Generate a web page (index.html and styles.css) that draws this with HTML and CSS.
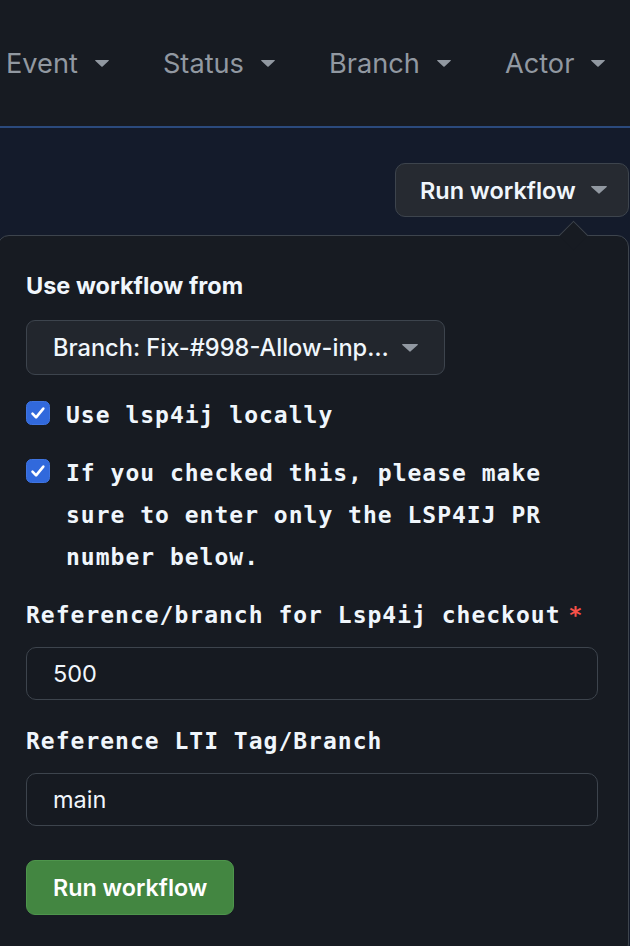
FILE: index.html
```html
<!DOCTYPE html>
<html lang="en">
<head>
<meta charset="utf-8">
<title>Run workflow</title>
<link rel="stylesheet" href="styles.css">
</head>
<body>
<header class="filters">
  <div class="filter">Event <svg class="caret" viewBox="0 0 14 7"><path d="M0.6 0h12.8a.5.5 0 0 1 .35.85L7.35 6.65a.5.5 0 0 1-.7 0L.25.85A.5.5 0 0 1 .6 0z"/></svg></div>
  <div class="filter">Status <svg class="caret" viewBox="0 0 14 7"><path d="M0.6 0h12.8a.5.5 0 0 1 .35.85L7.35 6.65a.5.5 0 0 1-.7 0L.25.85A.5.5 0 0 1 .6 0z"/></svg></div>
  <div class="filter">Branch <svg class="caret" viewBox="0 0 14 7"><path d="M0.6 0h12.8a.5.5 0 0 1 .35.85L7.35 6.65a.5.5 0 0 1-.7 0L.25.85A.5.5 0 0 1 .6 0z"/></svg></div>
  <div class="filter">Actor <svg class="caret" viewBox="0 0 14 7"><path d="M0.6 0h12.8a.5.5 0 0 1 .35.85L7.35 6.65a.5.5 0 0 1-.7 0L.25.85A.5.5 0 0 1 .6 0z"/></svg></div>
</header>
<section class="run-area">
  <div class="run-bar">
    <button class="run-toggle">Run workflow <svg class="caret-sm" viewBox="0 0 14 7"><path d="M0.6 0h12.8a.5.5 0 0 1 .35.85L7.35 6.65a.5.5 0 0 1-.7 0L.25.85A.5.5 0 0 1 .6 0z"/></svg></button>
  </div>
  <div class="popover">
    <span class="popover-arrow"></span>
    <div class="field-title">Use workflow from</div>
    <button class="branch-select">Branch: Fix-#998-Allow-inp… <svg class="caret-sm" viewBox="0 0 14 7"><path d="M0.6 0h12.8a.5.5 0 0 1 .35.85L7.35 6.65a.5.5 0 0 1-.7 0L.25.85A.5.5 0 0 1 .6 0z"/></svg></button>
    <label class="check-row">
      <svg class="checkbox" viewBox="0 0 24 24"><rect x="0.5" y="0.5" width="23" height="23" rx="5" fill="#3169dc" stroke="#3f74e0"/><path d="M6.5 12.6l3.6 3.8 7.2-8.8" fill="none" stroke="#fff" stroke-width="2.6" stroke-linecap="round" stroke-linejoin="round"/></svg>
      <span>Use lsp4ij locally</span>
    </label>
    <label class="check-row">
      <svg class="checkbox" viewBox="0 0 24 24"><rect x="0.5" y="0.5" width="23" height="23" rx="5" fill="#3169dc" stroke="#3f74e0"/><path d="M6.5 12.6l3.6 3.8 7.2-8.8" fill="none" stroke="#fff" stroke-width="2.6" stroke-linecap="round" stroke-linejoin="round"/></svg>
      <span>If you checked this, please make sure to enter only the LSP4IJ PR number below.</span>
    </label>
    <div class="field-label">Reference/branch for Lsp4ij checkout<span class="req">*</span></div>
    <div class="text-input">500</div>
    <div class="field-label second">Reference LTI Tag/Branch</div>
    <div class="text-input">main</div>
    <button class="run-btn">Run workflow</button>
  </div>
</section>
</body>
</html>
```
FILE: styles.css
```css
html, body {
  margin: 0;
  padding: 0;
}
body {
  width: 630px;
  height: 946px;
  overflow: hidden;
  background: #171b22;
  font-family: Inter, "Noto Sans", sans-serif;
  color: #f0f6fc;
}
button {
  font-family: Inter, "Noto Sans", sans-serif;
  cursor: pointer;
}
.filters {
  height: 126px;
  display: flex;
  align-items: center;
  gap: 54px;
  padding-left: 6px;
  border-bottom: 2px solid #2b4a7d;
  color: #9198a1;
  font-size: 27.2px;
}
.filter {
  display: flex;
  align-items: center;
  gap: 17px;
}
.caret {
  width: 14px;
  height: 7px;
  fill: #9198a1;
}
.caret-sm {
  width: 16px;
  height: 8px;
  fill: #9198a1;
  flex: none;
}
.run-area {
  background: #141b2b;
  padding-top: 35px;
}
.run-bar {
  display: flex;
  justify-content: flex-end;
  padding-right: 1px;
  margin-bottom: 18px;
}
.run-toggle {
  height: 54px;
  width: 234px;
  padding: 0 0 0 24px;
  display: flex;
  align-items: center;
  gap: 15px;
  background: #262a31;
  border: 1px solid #3d444d;
  border-radius: 10px;
  color: #f0f6fc;
  font-size: 23.5px;
  font-weight: 600;
}
.popover {
  position: relative;
  margin: 0 1px 0 -3px;
  background: #171b22;
  border: 1px solid #3d444d;
  border-radius: 12px;
  padding: 34px 30px 40px 28px;
  display: flex;
  flex-direction: column;
  align-items: flex-start;
}
.popover-arrow {
  position: absolute;
  left: 565px;
  top: -11px;
  width: 20px;
  height: 20px;
  background: #171b22;
  border-left: 1px solid #3d444d;
  border-top: 1px solid #3d444d;
  transform: rotate(45deg);
}
.field-title {
  font-weight: 700;
  font-size: 23.5px;
  line-height: 32px;
  color: #f0f6fc;
}
.branch-select {
  margin-top: 18px;
  height: 55px;
  width: 419px;
  padding: 0 26px;
  display: flex;
  align-items: center;
  justify-content: space-between;
  background: #22262d;
  border: 1px solid #3d444d;
  border-radius: 9px;
  color: #f0f6fc;
  font-size: 23.6px;
  font-weight: 500;
}
.check-row {
  margin-top: 19px;
  display: flex;
  align-items: flex-start;
  gap: 16px;
  font-family: "DejaVu Sans Mono", "Liberation Mono", monospace;
  font-weight: 700;
  font-size: 23px;
  line-height: 42px;
  letter-spacing: 1px;
  color: #f0f6fc;
}
.check-row + .check-row {
  margin-top: 16px;
}
.check-row span {
  max-width: 500px;
}
.checkbox {
  width: 24px;
  height: 24px;
  margin-top: 7px;
  flex: none;
}
.field-label {
  margin-top: 16px;
  display: flex;
  gap: 8px;
  font-family: "DejaVu Sans Mono", "Liberation Mono", monospace;
  font-weight: 700;
  font-size: 23px;
  line-height: 42px;
  letter-spacing: 1px;
  color: #f0f6fc;
}
.field-label.second {
  margin-top: 20px;
}
.req {
  color: #f85149;
}
.text-input {
  margin-top: 11px;
  width: 100%;
  box-sizing: border-box;
  height: 53px;
  padding: 0 26px;
  display: flex;
  align-items: center;
  background: #161a21;
  border: 1px solid #3d444d;
  border-radius: 10px;
  font-size: 23.5px;
  color: #f0f6fc;
}
.run-btn {
  margin-top: 34px;
  height: 55px;
  padding: 0 26px;
  background: #438641;
  border: 1px solid #4e954c;
  border-radius: 9px;
  color: #ffffff;
  font-size: 23.3px;
  font-weight: 600;
}
```
